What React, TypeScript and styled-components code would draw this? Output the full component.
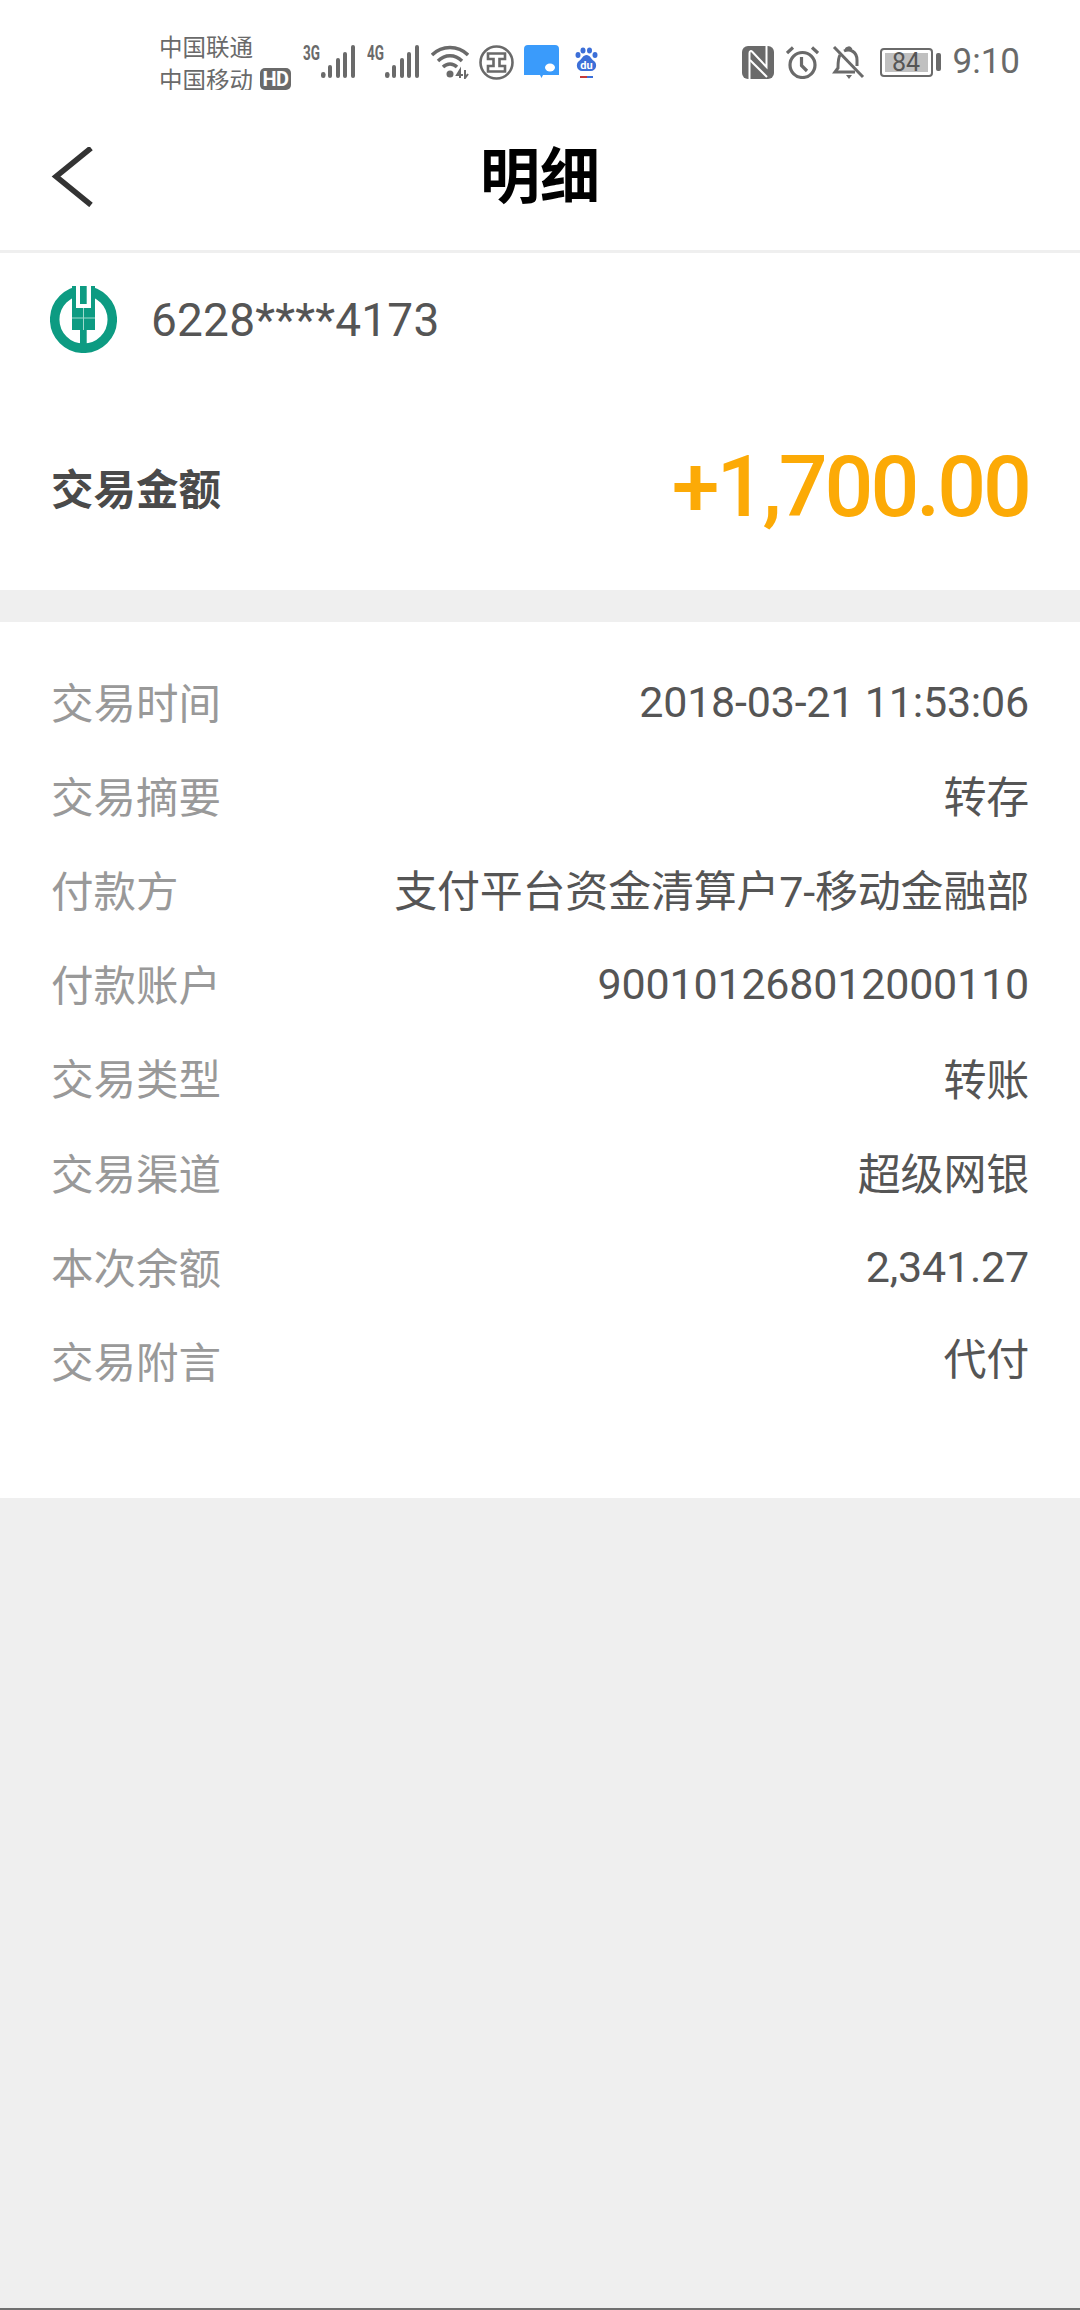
import * as React from 'react';
import styled, { createGlobalStyle } from 'styled-components';

const GlobalStyle = createGlobalStyle`
  html, body {
    margin: 0;
    padding: 0;
    background: #efefef;
  }
  body {
    font-family: Roboto, "Noto Sans CJK SC", sans-serif;
  }
`;

const Page = styled.div`
  width: 1080px;
  height: 2310px;
  display: flex;
  flex-direction: column;
  background: #efefef;
  overflow: hidden;
`;

const StatusBar = styled.div`
  height: 90px;
  flex: none;
  box-sizing: border-box;
  background: #fff;
  display: flex;
  align-items: center;
  justify-content: space-between;
  padding: 34px 60px 0 159px;
  color: #6a6a6a;
`;

const StatusGroup = styled.div<{ $gap: number }>`
  display: flex;
  align-items: center;
  gap: ${(p) => p.$gap}px;
`;

const Carriers = styled.div`
  display: flex;
  flex-direction: column;
  font-size: 23.500px;
  margin-right: 2px;
`;

const CarrierLine = styled.div`
  display: flex;
  align-items: center;
  gap: 7px;
  height: 33px;
`;

const HdBadge = styled.span`
  background: #6a6a6a;
  color: #fff;
  font-size: 20px;
  font-weight: 700;
  line-height: 22px;
  height: 22px;
  width: 31px;
  text-align: center;
  letter-spacing: -0.5px;
  border-radius: 5px;
`;

const Clock = styled.span`
  font-size: 35px;
  line-height: 40px;
`;

const BatteryWrap = styled.div`
  display: flex;
  align-items: center;
  gap: 3px;
  margin-left: 3px;
`;

const Battery = styled.div`
  width: 53px;
  height: 29px;
  box-sizing: border-box;
  border: 2px solid #6a6a6a;
  border-radius: 4px;
  padding: 3px;
  display: flex;
`;

const BatteryFill = styled.div`
  flex: 1;
  background: #c0c0c0;
  color: #555;
  font-size: 25px;
  line-height: 19px;
  text-align: center;
`;

const BatteryCap = styled.div`
  width: 5px;
  height: 18px;
  background: #6a6a6a;
  border-radius: 2px;
`;

const Header = styled.div`
  height: 163px;
  flex: none;
  box-sizing: border-box;
  background: #fff;
  border-bottom: 3px solid #efefef;
  display: flex;
  align-items: center;
  justify-content: center;
  position: relative;
`;

const BackIcon = styled.svg`
  position: absolute;
  left: 51px;
  top: 57px;
`;

const Title = styled.h1`
  margin: 3px 0 0;
  font-size: 60px;
  font-weight: 700;
  color: #000;
`;

const AmountCard = styled.div`
  height: 337px;
  flex: none;
  box-sizing: border-box;
  background: #fff;
  padding: 33px 51px 0 50px;
  margin-bottom: 32px;
`;

const AccountRow = styled.div`
  height: 67px;
  display: flex;
  align-items: center;
  gap: 34px;
`;

const AccountNo = styled.span`
  font-size: 46px;
  letter-spacing: 0.2px;
  color: #555;
`;

const AmountRow = styled.div`
  display: flex;
  align-items: center;
  justify-content: space-between;
  height: 140px;
  margin: 63px 0 0 1px;
`;

const AmountLabel = styled.span`
  font-size: 42.500px;
  font-weight: 700;
  color: #4a4a4a;
`;

const Amount = styled.span`
  font-size: 86px;
  font-weight: 500;
  letter-spacing: -3px;
  color: #fcaa06;
`;

const DetailCard = styled.div`
  height: 876px;
  flex: none;
  box-sizing: border-box;
  background: #fff;
  padding: 31px 51px 0;
`;

const DetailRow = styled.div`
  height: 94.2px;
  display: flex;
  align-items: center;
  justify-content: space-between;
`;

const DetailLabel = styled.span`
  font-size: 42.500px;
  color: #999;
`;

const DetailValue = styled.span<{ $numeric: boolean; $raised: boolean }>`
  font-size: 43px;
  letter-spacing: -0.2px;
  color: #555;
  padding-top: ${(p) => (p.$numeric ? 3 : 0)}px;
  margin-bottom: ${(p) => (p.$raised ? 6 : 0)}px;
`;

const Spacer = styled.div`
  flex: 1;
`;

const BottomLine = styled.div`
  height: 2px;
  flex: none;
  background: #707070;
`;

const SignalIcon = ({ tag }: { tag: string }) => (
  <svg width="54" height="42" viewBox="0 -4 54 42">
    <text
      x="0"
      y="15"
      fontSize="20"
      fontWeight="700"
      fontFamily="Roboto, sans-serif"
      fill="#6a6a6a"
      textLength="17"
      lengthAdjust="spacingAndGlyphs"
    >
      {tag}
    </text>
    <g fill="#6a6a6a">
      <rect x="18" y="27" width="4.500" height="6" rx="2.200" />
      <rect x="25" y="20" width="4" height="13" rx="2" />
      <rect x="33" y="13" width="4" height="20" rx="2" />
      <rect x="40" y="7" width="4" height="26" rx="2" />
      <rect x="48" y="0" width="4" height="33" rx="2" />
    </g>
  </svg>
);

const WifiIcon = () => (
  <svg width="38" height="34" viewBox="0 0 38 34" fill="none" stroke="#6a6a6a" strokeWidth="3.400">
    <path d="M1 10C11 0 27 0 37 10" />
    <path d="M7 16C14 9 24 9 31 16" />
    <path d="M12 22C16 18 22 18 26 22" />
    <circle cx="19" cy="29" r="3.500" fill="#6a6a6a" stroke="none" />
    <path d="M29 33V25L26 30H32M34 25V33L37 29" strokeWidth="2" />
  </svg>
);

const IcbcIcon = () => (
  <svg width="35" height="35" viewBox="0 0 35 35" fill="none" stroke="#6a6a6a" strokeWidth="2.600">
    <circle cx="17.500" cy="17.500" r="16" />
    <path d="M9 8.500H26V14H20.500V21H26V26.500H9V21H14.500V14H9Z" />
  </svg>
);

const MessageIcon = () => (
  <svg width="35" height="34" viewBox="0 0 35 34">
    <path d="M4 0H31A4 4 0 0 1 35 4V30H19L17.500 33L16 30H0V4A4 4 0 0 1 4 0Z" fill="#3a9bfb" />
    <ellipse cx="26" cy="22.500" rx="5" ry="4" fill="#fff" />
  </svg>
);

const BaiduIcon = () => (
  <svg width="29" height="36" viewBox="-6 -4 29 36">
    <g fill="#3c6fd8">
      <ellipse cx="3" cy="7" rx="2.500" ry="3" />
      <ellipse cx="8" cy="2.500" rx="2.500" ry="3" />
      <ellipse cx="14.500" cy="2.500" rx="2.500" ry="3" />
      <ellipse cx="20" cy="7" rx="2.500" ry="3" />
      <path d="M11.500 7C15 7 16 11 19 13C23 16 21 23 16 23H7C2 23 0 16 4 13C7 11 8 7 11.500 7Z" />
    </g>
    <text x="11.500" y="20.500" textAnchor="middle" fontSize="11" fontWeight="700" fontFamily="Roboto, sans-serif" fill="#fff">
      du
    </text>
    <rect x="5" y="28" width="7" height="2" fill="#c43a3a" />
    <rect x="12" y="28" width="6" height="2" fill="#3c6fd8" />
  </svg>
);

const NfcIcon = () => (
  <svg width="32" height="33" viewBox="0 0 32 33">
    <rect width="32" height="33" rx="6" fill="#6a6a6a" />
    <path d="M7.500 33V7C7.500 5 9 4.500 10.500 6L24.500 21V0" fill="none" stroke="#fff" strokeWidth="2" />
    <path d="M8 14L25 31" fill="none" stroke="#fff" strokeWidth="2" />
  </svg>
);

const AlarmIcon = () => (
  <svg width="33" height="33" viewBox="0 0 33 33" fill="none" stroke="#6a6a6a" strokeWidth="3.200">
    <circle cx="16.500" cy="19" r="12.500" />
    <path d="M15.500 11V19.500L21 25M1 7L7 1.500M32 7L26 1.500" />
  </svg>
);

const BellOffIcon = () => (
  <svg width="34" height="33" viewBox="0 0 34 33" fill="none" stroke="#6a6a6a" strokeWidth="3">
    <path d="M9 9C7 12 7 17 7 22L4 26H24M13 5C19 2 26 6 26 14V20M15 5C15 1 20 1 20 4" />
    <path d="M3 1L32 31" />
    <path d="M15 29H21L18 33Z" fill="#6a6a6a" stroke="none" />
  </svg>
);

const BankLogo = () => (
  <svg width="67" height="67" viewBox="0 0 67 67">
    <circle cx="33.500" cy="33.500" r="28.800" fill="none" stroke="#0d9b82" strokeWidth="9.500" />
    <path d="M22 0H45V44H36.700V66H30V44H22Z" fill="#0d9b82" />
    <path d="M26 0V22H41V0H36.700V18H30V0Z" fill="#fff" />
    <path d="M22 32H45M33.500 22V44" stroke="#9fdacd" strokeWidth="1" />
  </svg>
);

const rows: [string, string][] = [
  ['交易时间', '2018-03-21 11:53:06'],
  ['交易摘要', '转存'],
  ['付款方', '支付平台资金清算户7-移动金融部'],
  ['付款账户', '900101268012000110'],
  ['交易类型', '转账'],
  ['交易渠道', '超级网银'],
  ['本次余额', '2,341.27'],
  ['交易附言', '代付'],
];

export default function App() {
  return (
    <Page>
      <GlobalStyle />
      <StatusBar>
        <StatusGroup $gap={10}>
          <Carriers>
            <CarrierLine>中国联通</CarrierLine>
            <CarrierLine>
              中国移动
              <HdBadge>HD</HdBadge>
            </CarrierLine>
          </Carriers>
          <SignalIcon tag="3G" />
          <SignalIcon tag="4G" />
          <WifiIcon />
          <IcbcIcon />
          <MessageIcon />
          <BaiduIcon />
        </StatusGroup>
        <StatusGroup $gap={12}>
          <NfcIcon />
          <AlarmIcon />
          <BellOffIcon />
          <BatteryWrap>
            <Battery>
              <BatteryFill>84</BatteryFill>
            </Battery>
            <BatteryCap />
          </BatteryWrap>
          <Clock>9:10</Clock>
        </StatusGroup>
      </StatusBar>
      <Header>
        <BackIcon width="42" height="60" viewBox="0 0 42 60" fill="none" stroke="#333" strokeWidth="5.500">
          <path d="M40 1L5 29.500L40 58" />
        </BackIcon>
        <Title>明细</Title>
      </Header>
      <AmountCard>
        <AccountRow>
          <BankLogo />
          <AccountNo>6228****4173</AccountNo>
        </AccountRow>
        <AmountRow>
          <AmountLabel>交易金额</AmountLabel>
          <Amount>+1,700.00</Amount>
        </AmountRow>
      </AmountCard>
      <DetailCard>
        {rows.map(([label, value]) => (
          <DetailRow key={label}>
            <DetailLabel>{label}</DetailLabel>
            <DetailValue $numeric={/^\d/.test(value)} $raised={label === '交易附言'}>
              {value}
            </DetailValue>
          </DetailRow>
        ))}
      </DetailCard>
      <Spacer />
      <BottomLine />
    </Page>
  );
}
